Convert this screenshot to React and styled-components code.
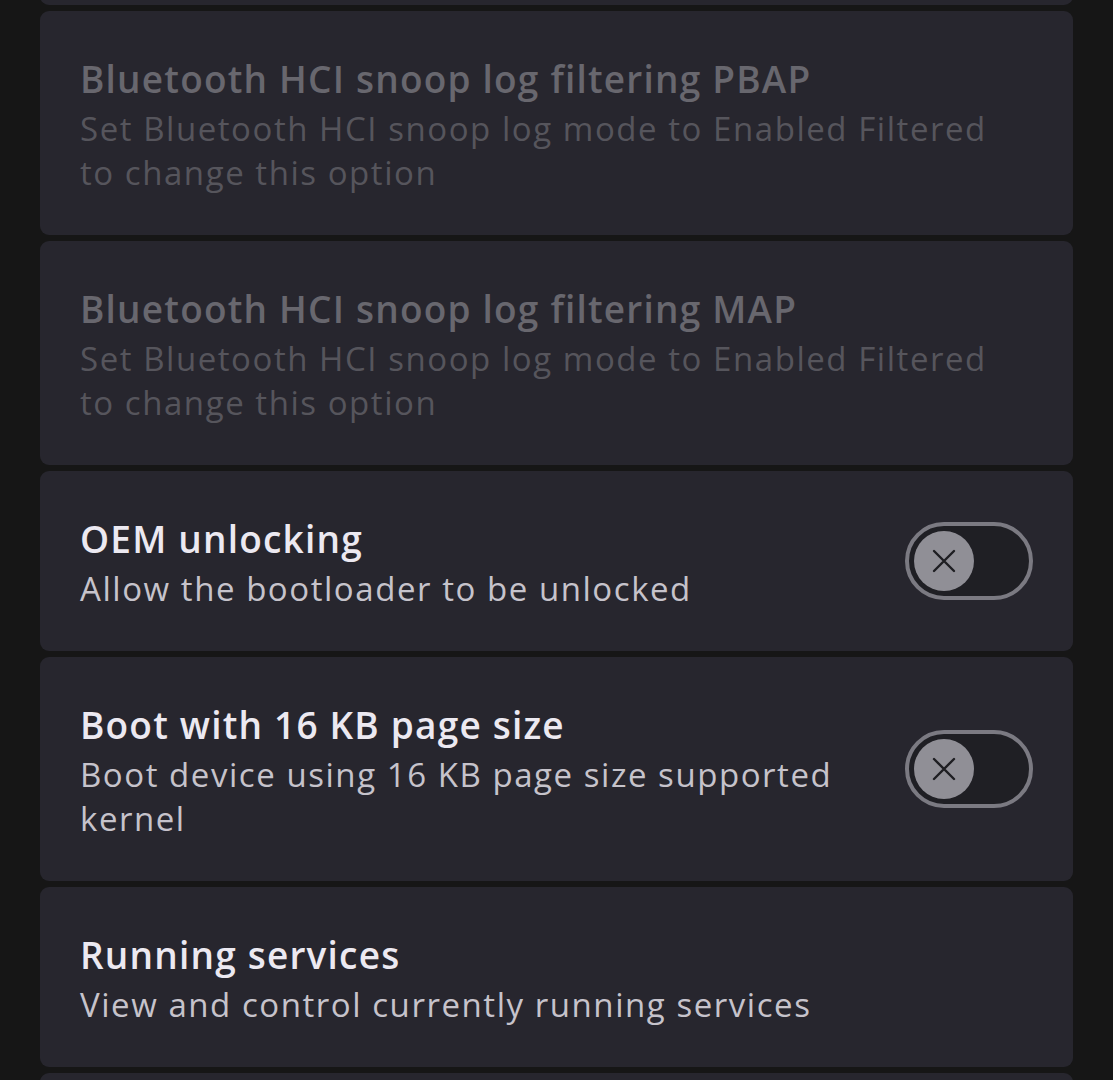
import React from "react";
import styled, { createGlobalStyle } from "styled-components";

const GlobalStyle = createGlobalStyle`
  html, body {
    margin: 0;
    padding: 0;
    background: #161616;
  }
  body {
    font-family: "Open Sans", "Noto Sans", sans-serif;
  }
`;

const Viewport = styled.div`
  height: 1080px;
  overflow: hidden;
  padding: 0 40px;
`;

const List = styled.div`
  display: flex;
  flex-direction: column;
  gap: 6px;
  /* scroll position */
  margin-top: -175px;
`;

const Card = styled.div`
  background: #27262e;
  border-radius: 9px;
  padding: 40px 40px;
  display: flex;
  align-items: center;
  gap: 40px;
  min-height: 100px;
`;

const TextBlock = styled.div`
  flex: 1;
  min-width: 0;
`;

const Title = styled.div`
  font-size: 37px;
  line-height: 56px;
  font-weight: 600;
  letter-spacing: 1.2px;
  color: ${(p) => (p.$disabled ? "#68676e" : "#ece9f1")};
`;

const Summary = styled.div`
  font-size: 33px;
  line-height: 44px;
  font-weight: 400;
  letter-spacing: 1.55px;
  color: ${(p) => (p.$disabled ? "#56555c" : "#c6c3cb")};
`;

const Switch = styled.button`
  flex: none;
  width: 128px;
  height: 78px;
  box-sizing: border-box;
  border: 4px solid #7b7a82;
  border-radius: 39px;
  background: #1f1f24;
  padding: 0 5px;
  display: flex;
  align-items: center;
  cursor: pointer;
`;

const Thumb = styled.span`
  width: 60px;
  height: 60px;
  border-radius: 50%;
  background: #908f96;
  display: flex;
  align-items: center;
  justify-content: center;
`;

const CrossIcon = () => (
  <svg width="24" height="24" viewBox="0 0 24 24">
    <path
      d="M2 2 L22 22 M22 2 L2 22"
      stroke="#1e1e22"
      strokeWidth="2.4"
      strokeLinecap="round"
    />
  </svg>
);

const items = [
  {
    title: "Enable Bluetooth HCI snoop log",
    summary: ["Disabled"],
  },
  {
    title: "Bluetooth HCI snoop log filtering PBAP",
    summary: ["Set Bluetooth HCI snoop log mode to Enabled Filtered", "to change this option"],
    disabled: true,
  },
  {
    title: "Bluetooth HCI snoop log filtering MAP",
    summary: ["Set Bluetooth HCI snoop log mode to Enabled Filtered", "to change this option"],
    disabled: true,
  },
  {
    title: "OEM unlocking",
    summary: ["Allow the bootloader to be unlocked"],
    toggle: true,
  },
  {
    title: "Boot with 16 KB page size",
    summary: ["Boot device using 16 KB page size supported", "kernel"],
    toggle: true,
  },
  {
    title: "Running services",
    summary: ["View and control currently running services"],
  },
  {
    title: "WebView implementation",
    summary: ["Android System WebView"],
  },
];

export default function App() {
  return (
    <>
      <GlobalStyle />
      <Viewport>
        <List>
          {items.map((item) => (
            <Card key={item.title}>
              <TextBlock>
                <Title $disabled={item.disabled}>{item.title}</Title>
                {item.summary.map((line) => (
                  <Summary key={line} $disabled={item.disabled}>
                    {line}
                  </Summary>
                ))}
              </TextBlock>
              {item.toggle && (
                <Switch aria-label={item.title}>
                  <Thumb>
                    <CrossIcon />
                  </Thumb>
                </Switch>
              )}
            </Card>
          ))}
        </List>
      </Viewport>
    </>
  );
}
